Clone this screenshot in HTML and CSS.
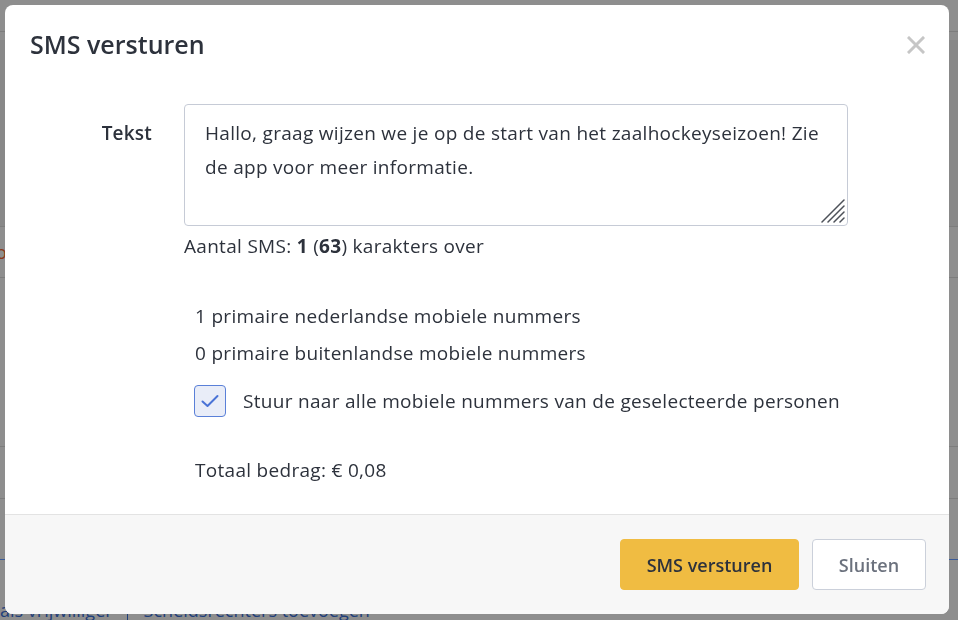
FILE: index.html
```html
<!DOCTYPE html>
<html lang="nl">
<head>
<meta charset="utf-8">
<title>SMS versturen</title>
<link rel="stylesheet" href="styles.css">
</head>
<body>
<div class="page">
  <div class="page-top">
    <span class="page-glyph">U</span>
    <span class="page-team">kies team</span>
  </div>
  <div class="page-band"></div>
  <div class="page-row"><span class="page-orange">o</span></div>
  <div class="page-row tall"></div>
  <div class="page-row"></div>
  <div class="page-links">
    <span>als vrijwilliger</span>
    <span class="sep">Scheidsrechters toevoegen</span>
  </div>
</div>

<div class="overlay">
  <div class="modal">
    <div class="modal-header">
      <h1 class="modal-title">SMS versturen</h1>
      <button class="close" aria-label="Sluiten">
        <svg width="18" height="18" viewBox="0 0 18 18"><path d="M2 2L16 16M16 2L2 16" stroke="#c6c6c6" stroke-width="3" stroke-linecap="square"/></svg>
      </button>
    </div>
    <div class="modal-body">
      <div class="field">
        <label class="field-label" for="tekst">Tekst</label>
        <div class="field-control">
          <div class="textarea-wrap">
            <textarea id="tekst" class="textarea">Hallo, graag wijzen we je op de start van het zaalhockeyseizoen! Zie de app voor meer informatie.</textarea>
            <svg class="grip" width="26" height="26" viewBox="0 0 26 26"><path d="M25 3L3 25M25 9L9 25M25 15L15 25M25 21L21 25" stroke="#4d5159" stroke-width="1.5" stroke-linecap="round"/></svg>
          </div>
          <div class="counter">Aantal SMS: <b>1</b> (<b>63</b>) karakters over</div>
          <div class="info">
            <p class="line">1 primaire nederlandse mobiele nummers</p>
            <p class="line">0 primaire buitenlandse mobiele nummers</p>
            <div class="check-row">
              <span class="checkbox">
                <svg width="20" height="16" viewBox="0 0 20 16"><path d="M2.5 8.5L7.5 13L17.5 3" fill="none" stroke="#4a73d6" stroke-width="2" stroke-linecap="round" stroke-linejoin="round"/></svg>
              </span>
              <span class="check-label">Stuur naar alle mobiele nummers van de geselecteerde personen</span>
            </div>
            <p class="line total">Totaal bedrag: € 0,08</p>
          </div>
        </div>
      </div>
    </div>
    <div class="modal-footer">
      <button class="btn btn-primary">SMS versturen</button>
      <button class="btn btn-secondary">Sluiten</button>
    </div>
  </div>
</div>
</body>
</html>
```
FILE: styles.css
```css
* { box-sizing: border-box; }
html, body { margin: 0; padding: 0; }
body {
  width: 958px;
  height: 620px;
  overflow: hidden;
  background: #8e8e8e;
  font-family: "Open Sans", "Noto Sans", sans-serif;
  color: #2d323c;
}
.page { width: 958px; height: 620px; display: flex; flex-direction: column; }
.page-top {
  height: 32px;
  border-bottom: 1px solid #7d7d7d;
  display: flex;
  align-items: flex-end;
}
.page-glyph { margin-left: 100px; color: #333; font-size: 22px; line-height: 10px; height: 6px; overflow: hidden; }
.page-team { margin-left: auto; margin-right: 200px; color: #444; font-size: 18px; height: 6px; overflow: hidden; line-height: 0; border-left: 1px solid #7d7d7d; padding-left: 8px; }
.page-band { height: 188px; background: #888; border-bottom: 1px solid #7d7d7d; margin-top: 8px; }
.page-row { height: 52px; border-bottom: 1px solid #7d7d7d; display: flex; align-items: center; }
.page-row.tall { height: 170px; }
.page-orange { color: #8a3a1a; font-size: 18px; margin-left: -4px; }
.page-links {
  margin-top: 60px;
  border-top: 1px solid #3a5a96;
  padding-top: 40px;
  color: #1f3f7a;
  font-size: 18px;
  display: flex;
  gap: 14px;
  line-height: 20px;
}
.page-links .sep { border-left: 1px solid #1f3f7a; padding-left: 16px; }

.overlay {
  position: fixed;
  inset: 0;
  padding: 5px 9px 6px 5px;
}
.modal {
  width: 944px;
  height: 609px;
  background: #fff;
  border-radius: 8px;
  display: flex;
  flex-direction: column;
  overflow: hidden;
}
.modal-header {
  display: flex;
  justify-content: space-between;
  align-items: flex-start;
  padding: 22px 24px 0 25px;
  height: 99px;
}
.modal-title {
  margin: 0;
  font-size: 25px;
  font-weight: 600;
  line-height: 34px;
  color: #2d323c;
}
.close {
  border: 0;
  background: none;
  padding: 0;
  margin-top: 9px;
  width: 18px;
  height: 18px;
  display: flex;
}
.modal-body { flex: 1; }
.field { display: flex; gap: 32px; }
.field-label {
  width: 147px;
  text-align: right;
  font-weight: 600;
  font-size: 19px;
  line-height: 24px;
  padding-top: 17px;
  letter-spacing: 0.2px;
}
.field-control { width: 664px; }
.textarea-wrap { position: relative; width: 664px; height: 122px; }
.textarea {
  display: block;
  width: 664px;
  height: 122px;
  border: 1px solid #c6cbd6;
  border-radius: 4px;
  padding: 11px 20px;
  font-family: inherit;
  font-size: 19px;
  letter-spacing: 0.3px;
  line-height: 34px;
  color: #2d323c;
  resize: none;
  outline: none;
}
.grip { position: absolute; right: 3px; bottom: 3px; }
.counter { margin-top: 8px; font-size: 19px; letter-spacing: 0.3px; line-height: 24px; }
.counter b { font-weight: 700; }
.info { padding-left: 11px; margin-top: 46px; }
.line { margin: 0 0 13px; font-size: 19px; letter-spacing: 0.3px; line-height: 24px; }
.check-row { display: flex; align-items: center; gap: 17px; margin-left: -1px; margin-top: 20px; }
.checkbox {
  width: 32px;
  height: 32px;
  border: 1px solid #5a80d8;
  background: #e9edf8;
  border-radius: 4px;
  display: flex;
  align-items: center;
  justify-content: center;
}
.check-label { font-size: 19px; letter-spacing: 0.3px; line-height: 24px; }
.line.total { margin-top: 41px; }

.modal-footer {
  border-top: 1px solid #e3e3e3;
  background: #f7f7f7;
  height: 100px;
  display: flex;
  justify-content: flex-end;
  align-items: center;
  gap: 13px;
  padding-right: 23px;
}
.btn {
  height: 51px;
  border-radius: 4px;
  font-family: inherit;
  font-size: 18px;
  font-weight: 600;
  padding: 0;
}
.btn-primary {
  width: 179px;
  background: #f0bc42;
  border: 1px solid #f0bc42;
  color: #2d323c;
}
.btn-secondary {
  width: 114px;
  background: #fff;
  border: 1px solid #cbd0da;
  color: #6b717d;
}
```
